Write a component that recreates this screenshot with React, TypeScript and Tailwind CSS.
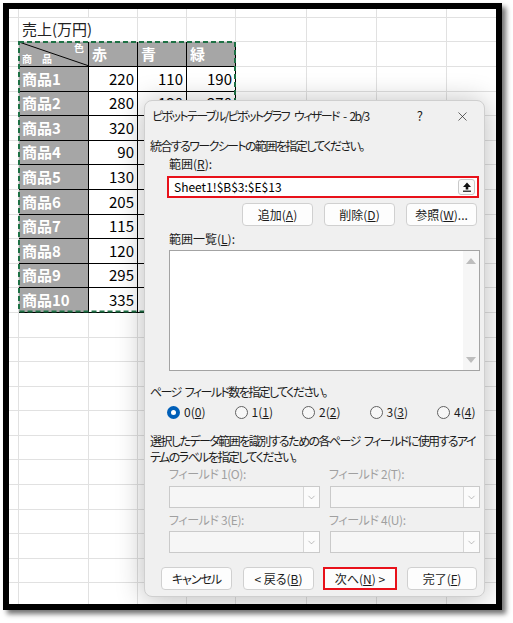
import React from 'react';
import { X, ChevronDown } from 'lucide-react';

// only the first two rows show the 青/緑 values; the rest sit under the dialog
const products = [
  { name: '商品1', r: 220, b: '110', g: '190' },
  { name: '商品2', r: 280, b: '130', g: '270' },
  { name: '商品3', r: 320, b: '', g: '' },
  { name: '商品4', r: 90, b: '', g: '' },
  { name: '商品5', r: 130, b: '', g: '' },
  { name: '商品6', r: 205, b: '', g: '' },
  { name: '商品7', r: 115, b: '', g: '' },
  { name: '商品8', r: 120, b: '', g: '' },
  { name: '商品9', r: 295, b: '', g: '' },
  { name: '商品10', r: 335, b: '', g: '' },
];

const gridCell = 'border-r border-b border-[#e1e1e1]';

function Sp({ w = 'w-[4px]' }: { w?: string }) {
  return <span className={`inline-block ${w}`} />;
}

function GridColumn({ w }: { w: string }) {
  return (
    <div className={`${w} shrink-0 flex flex-col`}>
      <div className={`h-[8.8px] shrink-0 ${gridCell}`} />
      {Array.from({ length: 24 }).map((_, i) => (
        <div key={i} className={`h-[24.6px] shrink-0 ${gridCell}`} />
      ))}
    </div>
  );
}

function EmptyRow({ h }: { h: string }) {
  return (
    <div className={`${h} shrink-0 flex`}>
      <div className={`w-[70px] ${gridCell}`} />
      <div className={`w-[49px] ${gridCell}`} />
      <div className={`w-[49px] ${gridCell}`} />
      <div className={`w-[49px] ${gridCell}`} />
    </div>
  );
}

function DataTable() {
  const head = 'bg-[#a6a6a6] text-white font-bold border-r border-b border-black flex items-center pl-[3px]';
  const num = 'w-[49px] bg-white border-r border-b border-black flex items-center justify-end pr-[3px] text-[15px] text-black';
  return (
    <div className="relative flex flex-col">
      <div className="h-[24.6px] flex">
        <div className="relative w-[70px] bg-[#a6a6a6] border-r border-b border-black text-white">
          <svg className="absolute inset-0 w-full h-full" preserveAspectRatio="none" viewBox="0 0 70 24">
            <line x1="0" y1="0" x2="70" y2="24" stroke="#000" strokeWidth="1" />
          </svg>
          <span className="absolute right-[4px] top-[1px] text-[10px] leading-none font-bold">色</span>
          <span className="absolute left-[3px] bottom-[2px] text-[10px] leading-none font-bold">商　品</span>
        </div>
        <div className={`w-[49px] text-[15px] ${head}`}>赤</div>
        <div className={`w-[49px] text-[15px] ${head}`}>青</div>
        <div className={`w-[49px] text-[15px] ${head}`}>緑</div>
      </div>
      {products.map((p) => (
        <div key={p.name} className="h-[24.6px] flex">
          <div className={`w-[70px] text-[15px] ${head}`}>{p.name}</div>
          <div className={num}>{p.r}</div>
          <div className={num}>{p.b}</div>
          <div className={num}>{p.g}</div>
        </div>
      ))}
      <svg className="absolute -left-px -top-px w-[calc(100%+1px)] h-[calc(100%+1px)] overflow-visible pointer-events-none">
        <rect x="1" y="1" width="calc(100% - 2px)" height="calc(100% - 2px)" fill="none" stroke="#1e7145" strokeWidth="2" strokeDasharray="5 3" />
      </svg>
    </div>
  );
}

function Btn({ children, className = '' }: { children: React.ReactNode; className?: string }) {
  return (
    <div className={`h-[23px] shrink-0 bg-[#fdfdfd] border border-[#d0d0d0] rounded-[4px] flex items-center justify-center text-[12px] text-[#1b1b1b] ${className}`}>
      {children}
    </div>
  );
}

function Radio({ label, k, checked }: { label: string; k: string; checked?: boolean }) {
  return (
    <div className="w-[67.5px] shrink-0 flex items-center gap-[4px]">
      {checked ? (
        <div className="w-[13px] h-[13px] shrink-0 rounded-full bg-[#005fb8] flex items-center justify-center">
          <div className="w-[5px] h-[5px] rounded-full bg-white" />
        </div>
      ) : (
        <div className="w-[13px] h-[13px] shrink-0 rounded-full border border-[#616161] bg-[#f7f7f7]" />
      )}
      <span className="text-[12px] text-[#1b1b1b] whitespace-nowrap">
        {label}(<span className="underline">{k}</span>)
      </span>
    </div>
  );
}

function Combo({ w }: { w: string }) {
  return (
    <div className={`${w} h-[22px] shrink-0 border border-[#cacaca] bg-[#f6f6f6] flex justify-end`}>
      <div className="w-[16px] h-full border-l border-[#d6d6d6] bg-[#fbfbfb] flex items-center justify-center">
        <ChevronDown size={11} strokeWidth={1.2} color="#8a8a8a" />
      </div>
    </div>
  );
}

function Dialog() {
  return (
    <div className="absolute left-[135px] top-[91px] w-[341px] h-[497px] overflow-hidden bg-[#f0f0f0] rounded-[8px] border border-[#cfcfcf] shadow-[0_2px_28px_rgba(0,0,0,0.28)] text-[12px] text-[#1b1b1b] [font-feature-settings:'palt']">
      <div className="h-[30px] flex items-center pl-[7px] pr-[14px]">
        <span className="text-[12px] text-[#222] tracking-[-1.6px] whitespace-nowrap">
          ピボットテーブル/ピボットグラフ<Sp w="w-[5px]" />ウィザード<Sp />-<Sp />2b/3
        </span>
        <span className="ml-auto text-[13px] mr-[32px]">?</span>
        <X size={15} strokeWidth={1.1} color="#222" />
      </div>
      <div className="ml-[5px] mt-[7px] h-[16px] leading-[16px] tracking-[-1.6px] whitespace-nowrap">統合するワークシートの範囲を指定してください。</div>
      <div className="ml-[24px] mt-[2px] h-[16px] leading-[16px]">
        範囲(<span className="underline">R</span>):
      </div>
      <div className="ml-[22px] mt-[4px] w-[312px] h-[22px] border-2 border-[#e8111a] bg-white flex items-center pl-[5px] pr-[2px]">
        <span className="text-[12px] text-black">Sheet1!$B$3:$E$13</span>
        <div className="ml-auto w-[17px] h-[16px] border border-[#c9c9c9] rounded-[3px] bg-[#fbfbfb] flex items-center justify-center">
          <svg width="10" height="10" viewBox="0 0 10 10">
            <path d="M5 0.5 L9 5 H6.3 V7.6 H3.7 V5 H1 Z" fill="#111" />
            <rect x="1" y="8.6" width="8" height="1.2" fill="#111" />
          </svg>
        </div>
      </div>
      <div className="mt-[5px] flex justify-end gap-[11px] pr-[7px]">
        <Btn className="w-[71px]">追加(<span className="underline">A</span>)</Btn>
        <Btn className="w-[71px]">削除(<span className="underline">D</span>)</Btn>
        <Btn className="w-[71px]">参照(<span className="underline">W</span>)...</Btn>
      </div>
      <div className="ml-[24px] mt-[5px] h-[16px] leading-[16px]">
        範囲一覧(<span className="underline">L</span>):
      </div>
      <div className="ml-[24px] mt-[3px] w-[311px] h-[121px] border border-[#a3a3a3] bg-white flex justify-end">
        <div className="w-[16px] h-full bg-[#f6f6f6] flex flex-col items-center justify-between py-[7px]">
          <div className="w-0 h-0 border-l-[5px] border-r-[5px] border-b-[6px] border-l-transparent border-r-transparent border-b-[#bdbdbd]" />
          <div className="w-0 h-0 border-l-[5px] border-r-[5px] border-t-[6px] border-l-transparent border-r-transparent border-t-[#bdbdbd]" />
        </div>
      </div>
      <div className="ml-[5px] mt-[13px] h-[16px] leading-[16px] tracking-[-1.6px] whitespace-nowrap">
        ページ<Sp />フィールド数を指定してください。
      </div>
      <div className="ml-[22px] mt-[4px] h-[16px] flex items-center">
        <Radio label="0" k="0" checked />
        <Radio label="1" k="1" />
        <Radio label="2" k="2" />
        <Radio label="3" k="3" />
        <Radio label="4" k="4" />
      </div>
      <div className="ml-[5px] mt-[13px] leading-[16px] tracking-[-1.55px] whitespace-nowrap">
        <div>
          選択したデータ範囲を識別するための各ページ<Sp />フィールドに使用するアイ
        </div>
        <div>テムのラベルを指定してください。</div>
      </div>
      <div className="ml-[24px] mt-[1px] flex text-[#a0a0a0] h-[16px] leading-[16px] tracking-[-0.4px] whitespace-nowrap">
        <span className="w-[160px] shrink-0">フィールド 1(O):</span>
        <span>フィールド 2(T):</span>
      </div>
      <div className="ml-[24px] mt-[4px] flex gap-[10px]">
        <Combo w="w-[151px]" />
        <Combo w="w-[150px]" />
      </div>
      <div className="ml-[24px] mt-[4px] flex text-[#a0a0a0] h-[16px] leading-[16px] tracking-[-0.4px] whitespace-nowrap">
        <span className="w-[160px] shrink-0">フィールド 3(E):</span>
        <span>フィールド 4(U):</span>
      </div>
      <div className="ml-[24px] mt-[3px] flex gap-[10px]">
        <Combo w="w-[151px]" />
        <Combo w="w-[150px]" />
      </div>
      <div className="ml-[16px] mt-[14px] flex items-center">
        <Btn className="w-[71px] tracking-[-1px]">キャンセル</Btn>
        <Btn className="w-[71px] ml-[11px]">&lt; 戻る(<span className="underline">B</span>)</Btn>
        <div className="ml-[9px] w-[74px] h-[23px] shrink-0 border-2 border-[#e8111a] bg-[#fdfdfd] flex items-center justify-center text-[12px]">
          次へ(<span className="underline">N</span>) &gt;
        </div>
        <Btn className="w-[70px] ml-[10px]">完了(<span className="underline">F</span>)</Btn>
      </div>
    </div>
  );
}

export default function App() {
  return (
    <div className="w-[513px] h-[623px] bg-white pt-[3px] pl-[3px] font-['Noto_Sans_CJK_JP',sans-serif]">
      <div className="w-[499px] h-[607px] border-[6px] border-black shadow-[4px_4px_5px_rgba(0,0,0,0.55)]">
        <div className="relative w-full h-full overflow-hidden bg-white flex">
          <GridColumn w="w-[10px]" />
          <div className="w-[217px] shrink-0 flex flex-col">
            <EmptyRow h="h-[8.8px]" />
            <div className="h-[24.6px] shrink-0 flex">
              <div className={`w-[119px] ${gridCell} flex items-center pl-[3px] text-[15px] text-[#222] whitespace-nowrap`}>
                売上(万円)
              </div>
              <div className={`w-[49px] ${gridCell}`} />
              <div className={`w-[49px] ${gridCell}`} />
            </div>
            <DataTable />
            {Array.from({ length: 12 }).map((_, i) => (
              <EmptyRow key={i} h="h-[24.6px]" />
            ))}
          </div>
          <GridColumn w="w-[71px]" />
          <GridColumn w="w-[70px]" />
          <GridColumn w="w-[70px]" />
          <GridColumn w="w-[60px]" />
          <Dialog />
        </div>
      </div>
    </div>
  );
}
